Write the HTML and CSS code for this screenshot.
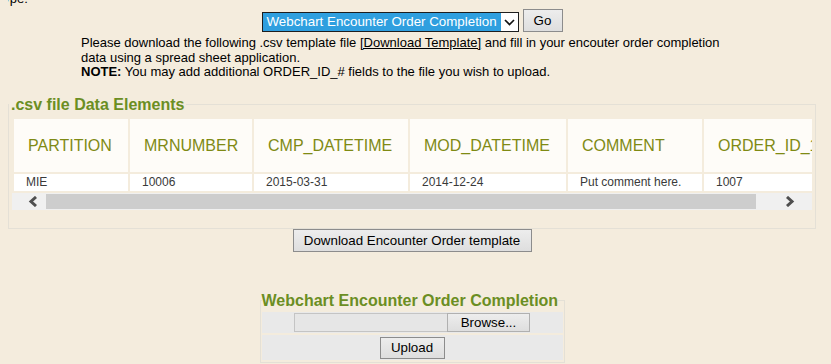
FILE: index.html
```html
<!DOCTYPE html>
<html>
<head>
    <meta charset="utf-8">
    <title>Encounter Order Completion Upload</title>
    <link rel="stylesheet" href="styles.css">
</head>
<body>
<div id="wrap">
    <div class="type-label">Type:</div>
    <div class="picker">
        <div class="select">
            <span class="select-text">Webchart Encounter Order Completion</span>
            <span class="select-arrow">
                <svg width="11" height="7" viewBox="0 0 11 7"><polyline points="1,1 5.5,5.5 10,1" fill="none" stroke="#111" stroke-width="1.7"/></svg>
            </span>
        </div>
        <button class="btn go">Go</button>
    </div>
    <p class="intro">Please download the following .csv template file <a href="#">[Download Template]</a> and fill in your encouter order completion data using a spread sheet application.<br><b>NOTE:</b> You may add additional ORDER_ID_# fields to the file you wish to upload.</p>

    <fieldset class="elements">
        <legend>.csv file Data Elements</legend>
        <div class="grid-scroll">
            <table class="data">
                <tr>
                    <th>PARTITION</th>
                    <th>MRNUMBER</th>
                    <th>CMP_DATETIME</th>
                    <th>MOD_DATETIME</th>
                    <th>COMMENT</th>
                    <th>ORDER_ID_1</th>
                </tr>
                <tr>
                    <td>MIE</td>
                    <td>10006</td>
                    <td>2015-03-31</td>
                    <td>2014-12-24</td>
                    <td>Put comment here.</td>
                    <td>1007</td>
                </tr>
            </table>
        </div>
        <div class="hscroll">
            <span class="sb-left">
                <svg width="10" height="11" viewBox="0 0 10 11"><polyline points="8,1 3,5.5 8,10" fill="none" stroke="#4f4f4f" stroke-width="3"/></svg>
            </span>
            <span class="sb-thumb"></span>
            <span class="sb-right">
                <svg width="10" height="11" viewBox="0 0 10 11"><polyline points="2,1 7,5.5 2,10" fill="none" stroke="#4f4f4f" stroke-width="3"/></svg>
            </span>
        </div>
    </fieldset>

    <button class="btn tmpl">Download Encounter Order template</button>

    <fieldset class="upload">
        <legend>Webchart Encounter Order Completion</legend>
        <table class="upload-form">
            <tr>
                <td><div class="cell"><span class="file-name"></span><button class="btn browse">Browse...</button></div></td>
            </tr>
            <tr>
                <td class="last"><div class="cell"><button class="btn send">Upload</button></div></td>
            </tr>
        </table>
    </fieldset>
</div>
</body>
</html>
```

FILE: styles.css
```css
body {
    margin: 0 8px;
    background: #f4ecdd;
    font-family: "Liberation Sans", Arial, sans-serif;
    font-size: 13px;
    color: #000;
}
#wrap {
    width: 808px;
}
.type-label {
    margin: -9px 0 0 -12px;
    line-height: 15px;
}
.picker {
    display: flex;
    justify-content: center;
    align-items: flex-start;
    margin-top: 3px;
}
.select {
    display: flex;
    box-sizing: border-box;
    width: 257px;
    height: 20px;
    margin-top: 3px;
    border: 1px solid #1e1e1e;
    background: #fff;
}
.select-text {
    flex: 1;
    padding-left: 4px;
    background: #2f9fdf;
    color: #fff;
    font-size: 13.33px;
    line-height: 18px;
    white-space: nowrap;
}
.select-arrow {
    display: flex;
    align-items: center;
    justify-content: center;
    width: 17px;
}
.btn {
    box-sizing: border-box;
    height: 23px;
    padding: 0;
    border: 1px solid #8c8c8c;
    border-radius: 0;
    background: linear-gradient(#ededed, #dedede);
    font-family: inherit;
    font-size: 13.33px;
    color: #000;
}
.go {
    width: 40px;
    margin-left: 4px;
}
.intro {
    width: 655px;
    margin: 4px 0 0 73px;
    line-height: 14.5px;
}
.intro a {
    color: #000;
}

fieldset {
    min-inline-size: 0;
    border: 1px solid #e4e0d6;
}
legend {
    font-size: 16px;
    font-weight: bold;
    line-height: 18px;
    color: #6b8e23;
}
.elements {
    margin: 16px 0 0;
    padding: 3px 3px 18px;
}
.elements legend {
    margin-left: -3px;
    padding: 0 2px;
}
.grid-scroll {
    width: 800px;
    overflow: hidden;
}
.data {
    width: 824px;
    table-layout: fixed;
    border-spacing: 2px;
}
.data th {
    padding: 18px 14px 17px;
    background: #fefcf8;
    color: #7f8a14;
    font-size: 16px;
    font-weight: normal;
    line-height: 18px;
    text-align: left;
    white-space: nowrap;
}
.data td {
    padding: 2px 12px;
    background: #fff;
    color: #3a3a3a;
    font-size: 12px;
    line-height: 13px;
    white-space: nowrap;
}
.data th:nth-child(1) { width: 86px; }
.data th:nth-child(2) { width: 94px; }
.data th:nth-child(3) { width: 126px; }
.data th:nth-child(4) { width: 128px; }
.data th:nth-child(5) { width: 106px; }
.data th:nth-child(6) { width: 102px; }

.hscroll {
    display: flex;
    width: 800px;
    height: 17px;
    background: #f0f0f0;
}
.sb-left {
    display: flex;
    align-items: center;
    box-sizing: border-box;
    width: 34px;
    padding-left: 16px;
}
.sb-thumb {
    width: 710px;
    margin: 1px 0;
    background: #cdcdcd;
}
.sb-right {
    display: flex;
    align-items: center;
    flex: 1;
    padding-left: 29px;
}

.tmpl {
    display: block;
    width: 239px;
    margin: 0 auto;
}

.upload {
    box-sizing: border-box;
    width: 305px;
    margin: 40px auto 0;
    padding: 0 1px;
}
.upload legend {
    margin: 0;
    padding: 0;
}
.upload-form {
    width: 100%;
    border-spacing: 0 2px;
}
.upload-form td {
    padding: 1px 0;
    background: #e9e9e9;
}
.upload-form td.last {
    padding: 2px 0 1px;
}
.cell {
    display: flex;
    justify-content: center;
}
.file-name {
    box-sizing: border-box;
    width: 153px;
    height: 19px;
    border: 1px solid #c4c4c4;
    border-right: 0;
    background: #e6e6e6;
}
.browse {
    width: 83px;
    height: 19px;
    border-color: #b0b0b0;
}
.send {
    width: 65px;
    height: 22px;
}
```
